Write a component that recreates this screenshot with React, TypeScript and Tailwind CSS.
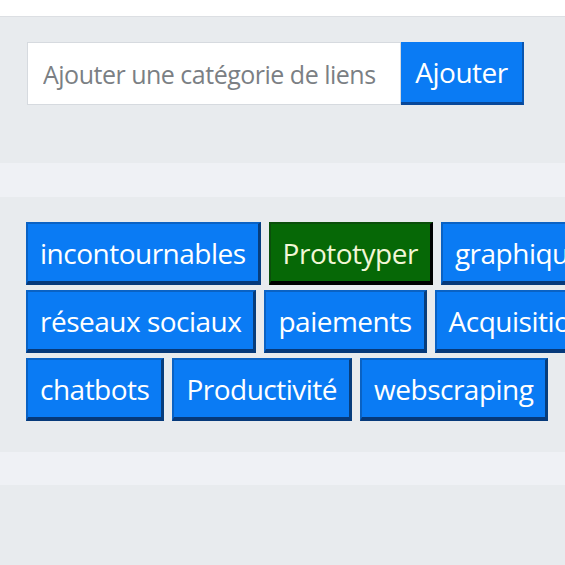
import { useState } from "react";

const categories = [
  { name: "incontournables" },
  { name: "Prototyper", active: true },
  { name: "graphiques" },
  { name: "réseaux sociaux" },
  { name: "paiements" },
  { name: "Acquisition" },
  { name: "chatbots" },
  { name: "Productivité" },
  { name: "webscraping" },
];

function CategoryTag({ name, active }: { name: string; active?: boolean }) {
  return (
    <button
      type="button"
      className={
        active
          ? "h-[63px] border-t-2 border-l-2 border-r-[3px] border-b-[4px] border-t-[#0b4f0b] border-l-[#0b4f0b] border-r-black border-b-black bg-[#066806] px-[12px] text-[#f2f7d6]"
          : "h-[63px] border-t-2 border-l-2 border-r-[3px] border-b-[4px] border-t-[#0a62c4] border-l-[#0a62c4] border-r-[#073d7c] border-b-[#06397a] bg-[#0a7bf4] px-[12px] text-white"
      }
    >
      {name}
    </button>
  );
}

export default function App() {
  const [value, setValue] = useState("");

  return (
    <div className="min-h-screen w-screen overflow-hidden bg-[#e8ebee] font-['Open_Sans',_sans-serif] text-[28px] font-[380] tracking-[-0.5px]">
      <header className="h-[17px] border-b border-[#dcdfe3] bg-white" />

      <section className="px-[27px] pt-[25px] pb-[58px]">
        <form className="flex h-[63px]" onSubmit={(e) => e.preventDefault()}>
          <input
            value={value}
            onChange={(e) => setValue(e.target.value)}
            placeholder="Ajouter une catégorie de liens"
            className="h-full w-[374px] border border-[#d6dadf] bg-white px-[15px] text-[25px] text-[#555] outline-none placeholder:text-[#7b7f84]"
          />
          <button
            type="submit"
            className="h-full w-[123px] border-r-2 border-b-[3px] border-r-[#0a56b0] border-b-[#08489a] bg-[#0a7bf4] text-white"
          >
            Ajouter
          </button>
        </form>
      </section>

      <div className="h-[34px] bg-[#eff1f5]" />

      <section className="px-[26px] pt-[25px] pb-[31px]">
        <div className="flex w-[680px] flex-wrap gap-x-[8px] gap-y-[5px]">
          {categories.map((c) => (
            <CategoryTag key={c.name} name={c.name} active={c.active} />
          ))}
        </div>
      </section>

      <div className="h-[33px] bg-[#eff1f5]" />
    </div>
  );
}
